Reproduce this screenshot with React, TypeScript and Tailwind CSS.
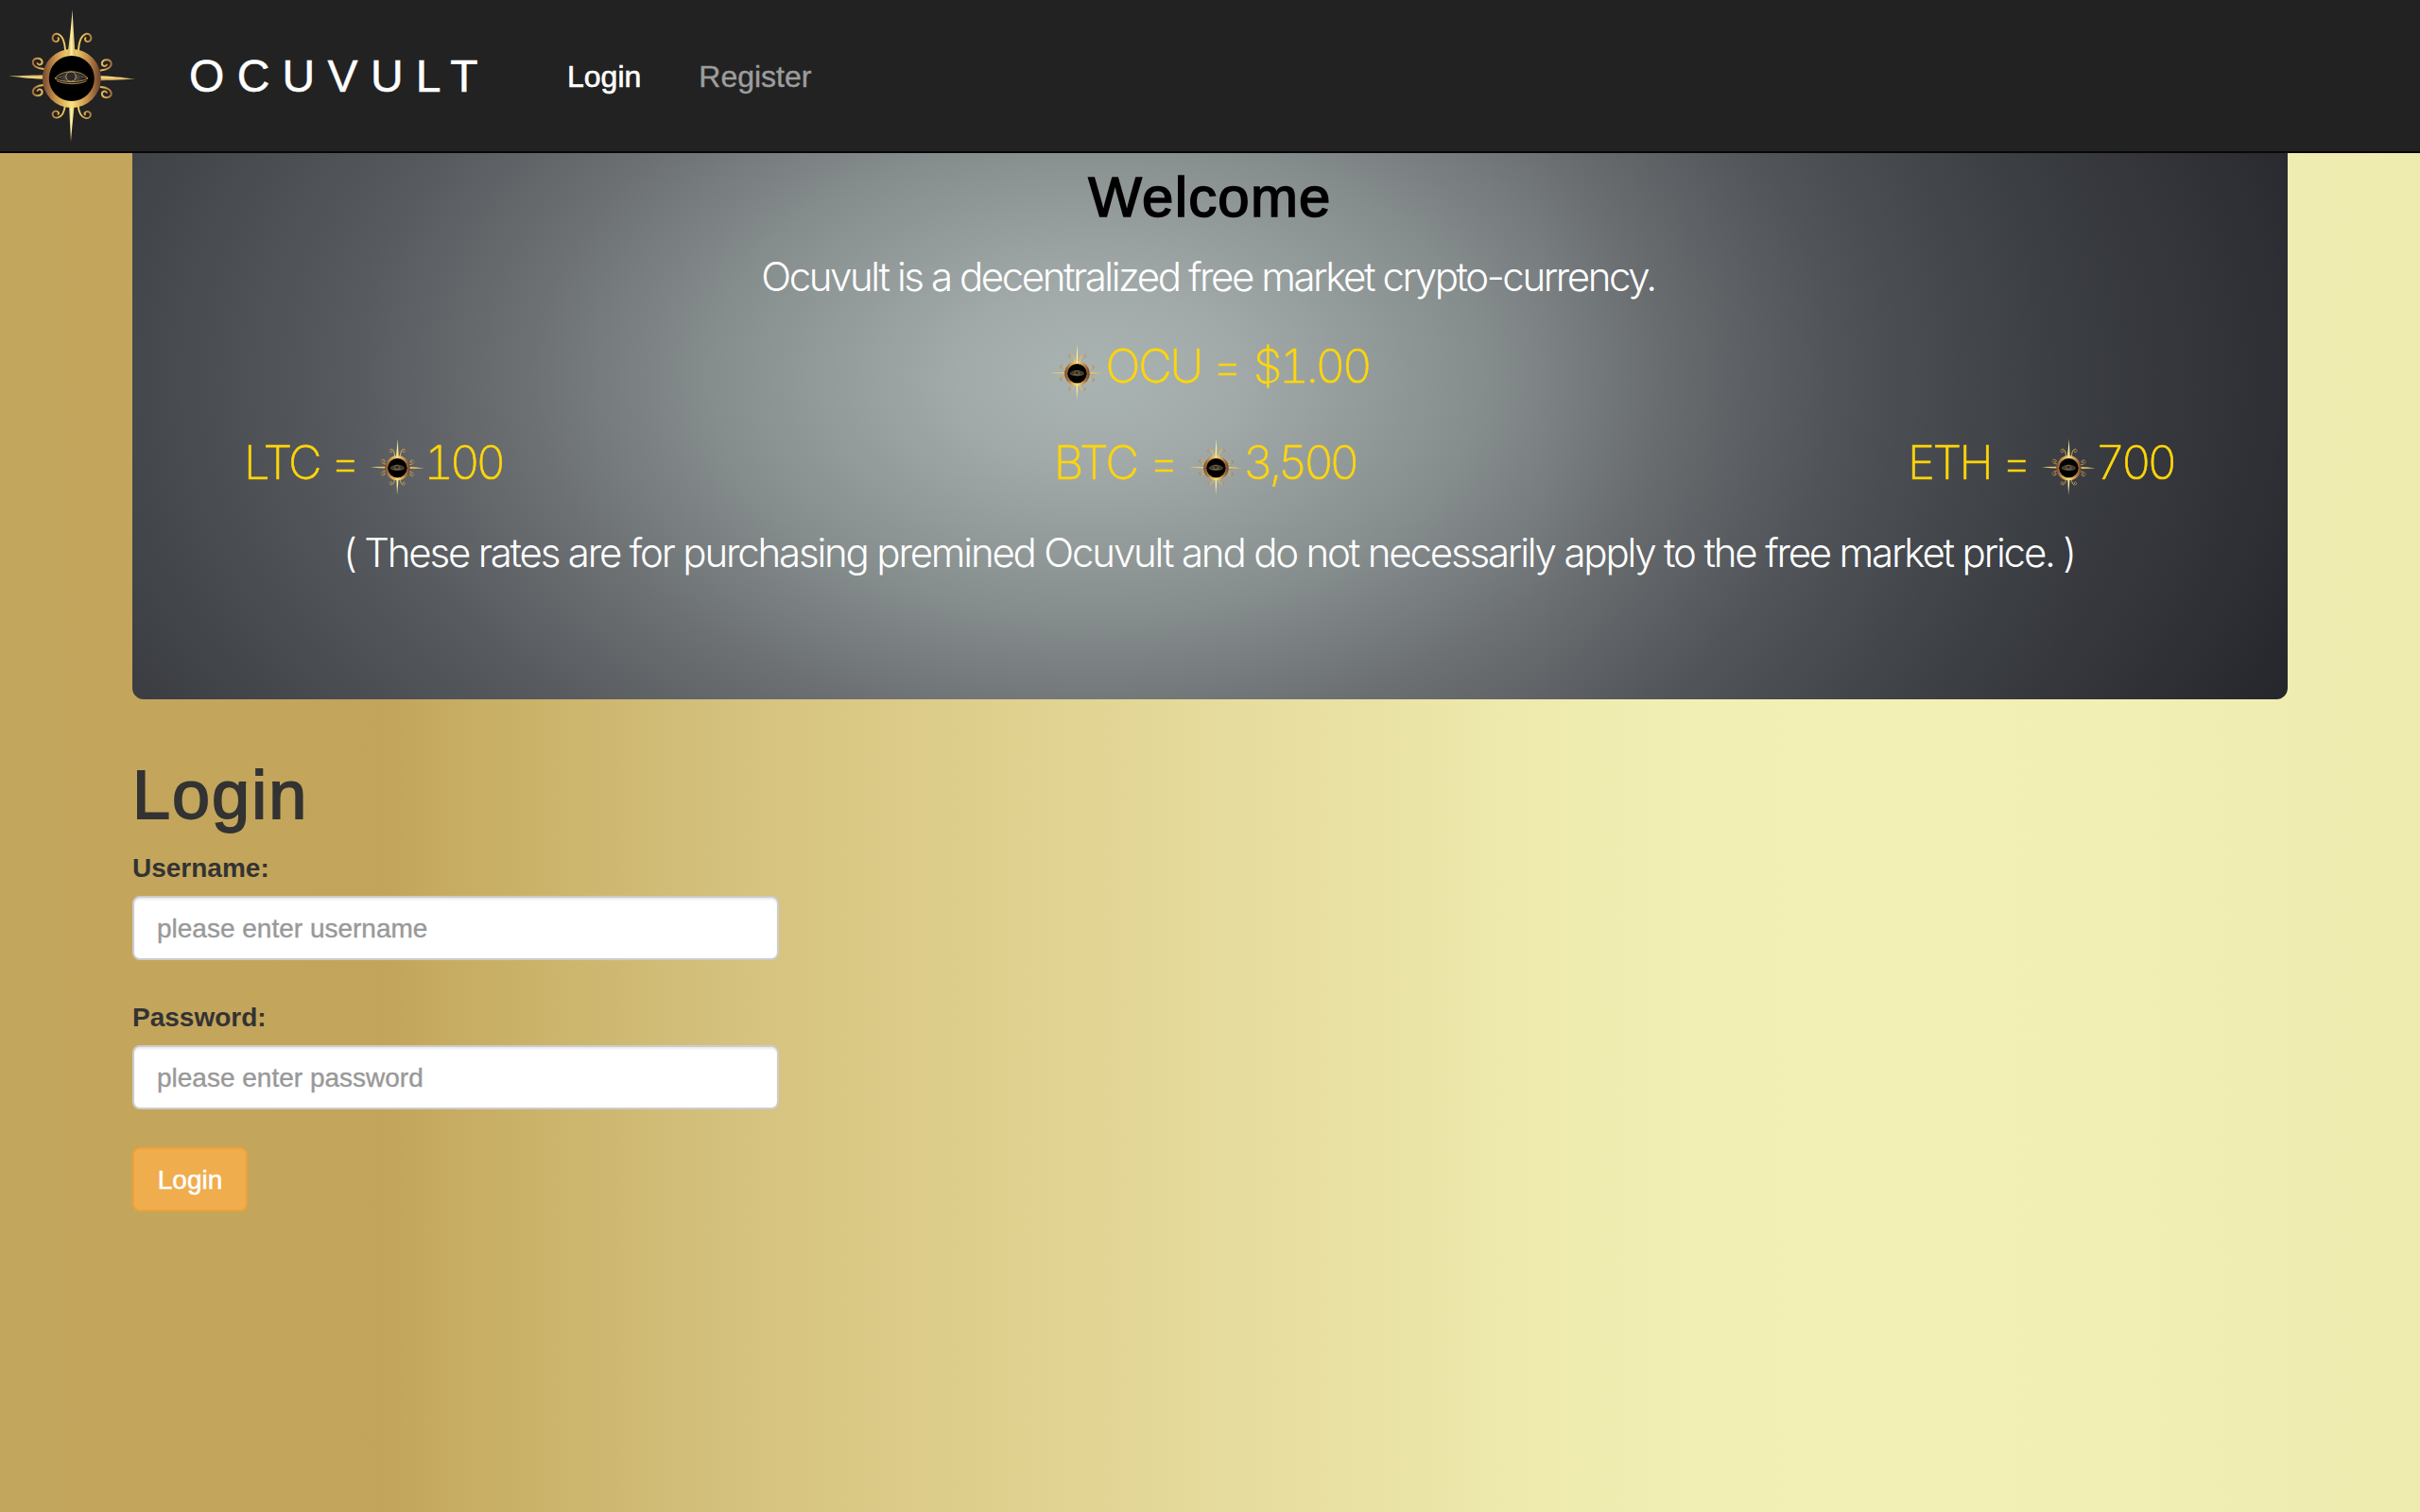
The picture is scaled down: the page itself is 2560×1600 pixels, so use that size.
import { useId } from "react";

function Curl() {
  return (
    <path
      d="M69 53C68.500 46 67 37.500 61 35.800C55.500 35 54 41.500 57.500 43.700C60.500 45 63 42.500 61.500 40"
      fill="none"
      strokeWidth="1.900"
      strokeLinecap="round"
    />
  );
}

function SideCurl() {
  return (
    <path
      d="M46 73C39 72.500 34 69.500 34.800 65C36 61 42.500 60.500 44.500 64.500C45.500 68 41.500 70 39.500 67"
      fill="none"
      strokeWidth="1.900"
      strokeLinecap="round"
    />
  );
}

function SunEye({ className }: { className: string }) {
  const id = useId().replace(/[^a-zA-Z0-9]/g, "");
  return (
    <svg viewBox="9 10 134 140" className={className} aria-hidden="true">
      <defs>
        <linearGradient id={`ring${id}`} x1="0" y1="0" x2="1" y2="0">
          <stop offset="0" stopColor="#74472f" />
          <stop offset="0.22" stopColor="#c99048" />
          <stop offset="0.5" stopColor="#fae37a" />
          <stop offset="0.78" stopColor="#c38a47" />
          <stop offset="1" stopColor="#6b3f2c" />
        </linearGradient>
        <linearGradient id={`gold${id}`} gradientUnits="userSpaceOnUse" x1="34" y1="0" x2="118" y2="0">
          <stop offset="0" stopColor="#a06c3a" />
          <stop offset="0.12" stopColor="#e6bc5c" />
          <stop offset="0.24" stopColor="#a87038" />
          <stop offset="0.34" stopColor="#e2b555" />
          <stop offset="0.42" stopColor="#f4d267" />
          <stop offset="0.6" stopColor="#f4d267" />
          <stop offset="0.67" stopColor="#e2b555" />
          <stop offset="0.75" stopColor="#a87038" />
          <stop offset="0.88" stopColor="#e6bc5c" />
          <stop offset="1" stopColor="#a06c3a" />
        </linearGradient>
        <linearGradient id={`vert${id}`} gradientUnits="userSpaceOnUse" x1="71" y1="0" x2="80" y2="0">
          <stop offset="0" stopColor="#cd9c42" />
          <stop offset="0.5" stopColor="#fdf2a6" />
          <stop offset="1" stopColor="#d3a248" />
        </linearGradient>
        <linearGradient id={`horz${id}`} gradientUnits="userSpaceOnUse" x1="0" y1="78" x2="0" y2="86">
          <stop offset="0" stopColor="#a9773a" />
          <stop offset="0.5" stopColor="#fbe185" />
          <stop offset="1" stopColor="#a06f34" />
        </linearGradient>
        <radialGradient id={`glow${id}`}>
          <stop offset="0" stopColor="#77716c" />
          <stop offset="0.55" stopColor="#4a4744" stopOpacity="0.7" />
          <stop offset="1" stopColor="#000" stopOpacity="0" />
        </radialGradient>
      </defs>
      <g stroke={`url(#gold${id})`}>
        <Curl />
        <g transform="translate(152 0) scale(-1 1)">
          <Curl />
        </g>
        <g transform="translate(0 155) scale(1 -0.850)">
          <Curl />
        </g>
        <g transform="translate(151.500 155.500) scale(-1 -0.850)">
          <Curl />
        </g>
        <SideCurl />
        <g transform="translate(152.500 1.500) scale(-1 1)">
          <SideCurl />
        </g>
        <g transform="translate(0 163) scale(1 -1)">
          <SideCurl />
        </g>
        <g transform="translate(152.500 165) scale(-1 -1)">
          <SideCurl />
        </g>
      </g>
      <path d="M75 150C74.500 136 73.500 124 73 108H79C77.500 124 76 136 75 150Z" fill={`url(#vert${id})`} />
      <path d="M9 80.500C24 80 35 79.500 50 79V84C35 83.500 24 82 9 80.500Z" fill={`url(#horz${id})`} />
      <path d="M143 83.500C128 82 118 80.500 104 80V85.500C118 85 128 84.500 143 83.500Z" fill={`url(#horz${id})`} />
      <circle cx="75.800" cy="83" r="31" fill={`url(#ring${id})`} />
      <path d="M76.500 10C77.500 28 78.500 42 79.500 58H71.500C73.500 42 75.500 28 76.500 10Z" fill={`url(#vert${id})`} />
      <circle cx="75.800" cy="83" r="24" fill="#000" />
      <ellipse cx="75.500" cy="82" rx="20" ry="9" fill={`url(#glow${id})`} />
      <circle cx="75" cy="81" r="5" fill="#2e2b2c" />
      <g fill="none" stroke="#c9a25a" strokeWidth="0.800">
        <circle cx="75" cy="81" r="5.200" />
        <path d="M58 83C65 74 85 73 93 83" />
        <path d="M58 83C66 87.500 84 88 93 83" />
        <path d="M60 85.500C68 89.500 84 90 91.500 85.500" />
        <path d="M58 83L65 81M93 83L86 80.500" strokeWidth="0.500" />
      </g>
    </svg>
  );
}

function Rate({ label, value, tracking = "tracking-[-2.500px]" }: { label: string; value: string; tracking?: string }) {
  return (
    <div className="flex h-[70px] items-center text-[49px] leading-[70px] font-extralight text-[#ffd60a] [-webkit-text-stroke:0.600px_#ffd60a]">
      <span className={`mt-[3px] ${tracking}`}>{label} =</span>
      <SunEye className="mt-3 ml-[13px] h-[60px] w-[57px]" />
      <span className="mt-[3px] tracking-[-4.200px] tabular-nums">{value}</span>
    </div>
  );
}

function Field({ label, type, hint }: { label: string; type: string; hint: string }) {
  return (
    <label className="block">
      <span className="block h-10 text-[28px] leading-[42px] font-bold">{label}</span>
      <input
        type={type}
        placeholder={hint}
        className="mt-[10px] block h-[68px] w-[684px] rounded-[8px] border-2 border-[#ccc] bg-white px-6 pt-[2px] text-[28px] shadow-[inset_0_2px_2px_rgba(0,0,0,0.075)] placeholder:text-[#999] placeholder:[-webkit-text-stroke:0.400px_#999]"
      />
    </label>
  );
}

export default function App() {
  return (
    <div className="h-[1600px] w-[2560px] overflow-hidden bg-[linear-gradient(90deg,#c3a65d_0%,#c3a55b_11%,#c2a55a_16%,#c7ad63_19%,#cdb66e_24%,#d4c17d_30%,#dccb88_37%,#e1d392_44%,#e6dc9d_51%,#eae2a5_57%,#eeeaae_63%,#f1efb4_70%,#f3f0b6_78%,#f1efb4_88%,#eeebaf_100%)] font-['Liberation_Sans',Arial,sans-serif] text-[#333]">
      <nav className="flex h-[162px] items-center border-b-2 border-[#080808] bg-[#222]">
        <SunEye className="ml-[9px] h-[140px] w-[134px]" />
        <span className="mt-[2px] ml-[57px] w-[400px] text-[48px] leading-[60px] tracking-[13.300px] text-white [-webkit-text-stroke:0.500px_#fff]">
          OCUVULT
        </span>
        <a className="mt-px text-[32px] leading-10 text-white [-webkit-text-stroke:0.600px_#fff]">Login</a>
        <a className="mt-px ml-[61px] text-[32px] leading-10 text-[#9d9d9d] [-webkit-text-stroke:0.400px_#9d9d9d]">
          Register
        </a>
      </nav>

      <section className="mx-auto flex h-[578px] w-[2280px] flex-col items-center rounded-b-[12px] bg-[linear-gradient(90deg,rgba(20,20,28,0)_65%,rgba(24,26,32,0.2)_90%,rgba(24,26,32,0.2)_100%),radial-gradient(1400px_870px_at_44.700%_41%,#a9b3b1_0%,#a2abaa_10%,#979f9e_18%,#868d8d_29%,#6c7073_43%,#56595d_57%,#45484d_72%,#383a40_85%,#26272c_100%)] font-['Inter','Liberation_Sans',sans-serif] font-light text-white">
        <h2 className="mt-[14px] font-['Liberation_Sans',Arial,sans-serif] text-[60px] leading-[66px] font-normal tracking-[1.200px] text-black [-webkit-text-stroke:1.600px_#000]">
          Welcome
        </h2>
        <p className="mt-[21px] mr-[4px] text-[42px] leading-[60px] tracking-[-2.430px] whitespace-nowrap">
          Ocuvult is a decentralized free market crypto-currency.
        </p>
        <div className="mt-[29px] flex h-[70px] items-center text-[49px] leading-[70px] font-extralight tracking-[-2.200px] text-[#ffd60a] [-webkit-text-stroke:0.600px_#ffd60a]">
          <SunEye className="mt-[14px] h-[60px] w-[57px]" />
          <span className="mt-[2px] ml-px">OCU =</span>
          <span className="mt-[2px] ml-[14px] tracking-[-3.200px] tabular-nums">$1.00</span>
        </div>
        <div className="mt-[31px] flex w-full justify-between pr-[121px] pl-[118px]">
          <Rate label="LTC" value="100" />
          <Rate label="BTC" value="3,500" tracking="tracking-[-1.700px]" />
          <Rate label="ETH" value="700" />
        </div>
        <p className="mt-[32px] mr-[2px] text-[42px] leading-[60px] tracking-[-2.180px] whitespace-nowrap">
          ( These rates are for purchasing premined Ocuvult and do not necessarily apply to the free market price. )
        </p>
      </section>

      <main className="mx-auto w-[2280px] pt-[61px]">
        <h1 className="text-[72px] leading-[80px] font-normal tracking-[2px] [-webkit-text-stroke:1.800px_#333]">Login</h1>
        <form className="mt-[17px]">
          <Field label="Username:" type="text" hint="please enter username" />
          <div className="mt-[40px]">
            <Field label="Password:" type="password" hint="please enter password" />
          </div>
          <button
            type="button"
            className="mt-[40px] h-[68px] w-[122px] rounded-[8px] border-2 border-[#eea236] bg-[#f0ad4e] pt-[2px] text-[28px] text-white [-webkit-text-stroke:0.500px_#fff]"
          >
            Login
          </button>
        </form>
      </main>
    </div>
  );
}
